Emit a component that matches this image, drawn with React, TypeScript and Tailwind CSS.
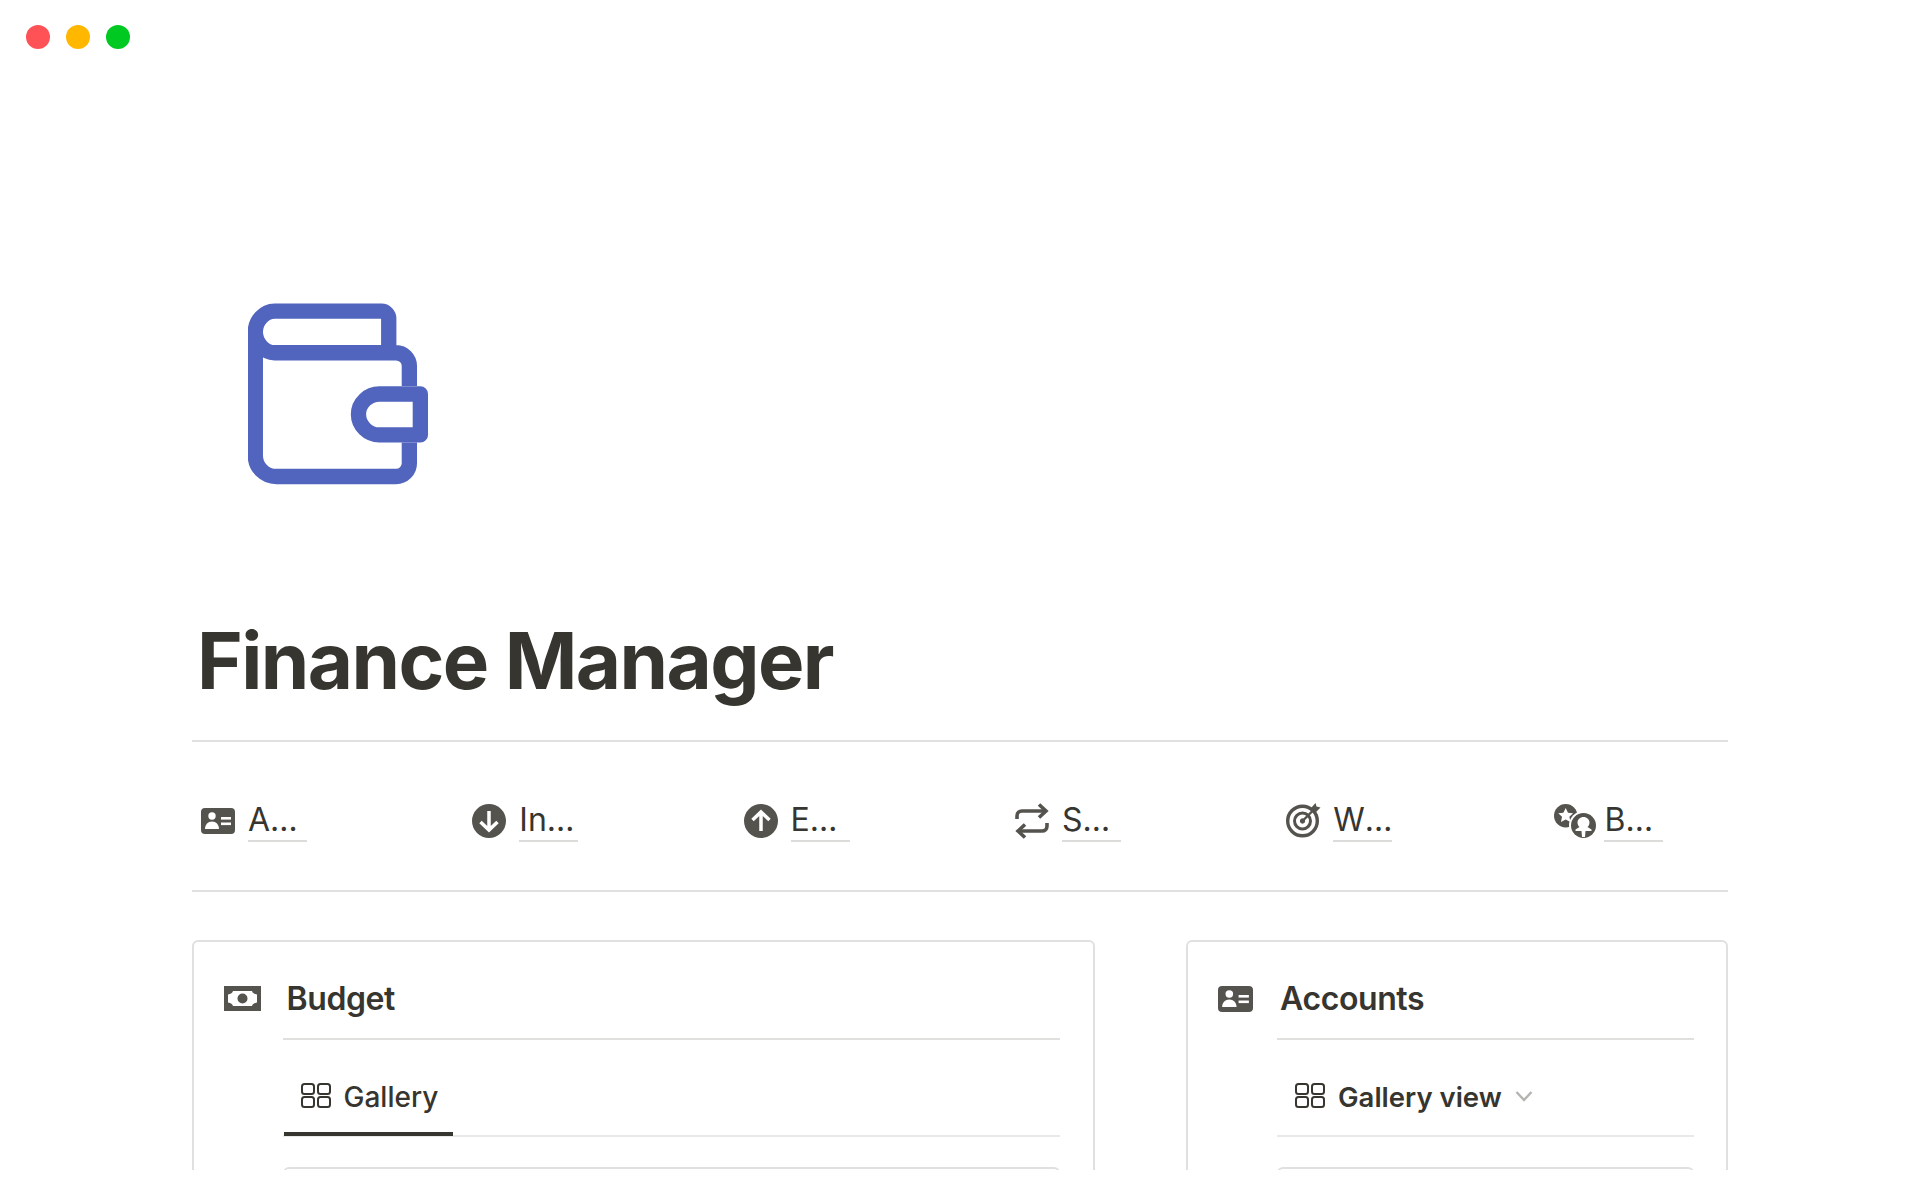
function IdCard({ className }: { className: string }) {
  return (
    <svg viewBox="0 0 34 26" preserveAspectRatio="none" className={className}>
      <rect width="34" height="26" rx="4" fill="#55534e" />
      <circle cx="11" cy="8" r="3.7" fill="#fff" />
      <path d="M4 21c0-4.5 3-7.5 7-7.5s7 3 7 7.500z" fill="#fff" />
      <rect x="20" y="9" width="10" height="2.6" fill="#fff" />
      <rect x="20" y="14.5" width="10" height="2.6" fill="#fff" />
    </svg>
  );
}

function ArrowCircle({ up }: { up?: boolean }) {
  return (
    <svg viewBox="0 0 34 34" className="h-[34px] w-[34px]">
      <circle cx="17" cy="17" r="17" fill="#55534e" />
      <path
        d={up ? "M17 27V8M8.5 16 17 8l8.5 8" : "M17 7v19M8.5 18l8.5 8 8.5-8"}
        fill="none"
        stroke="#fff"
        strokeWidth="3.5"
      />
    </svg>
  );
}

function Repeat() {
  return (
    <svg viewBox="0 0 34 36" className="h-[36px] w-[34px]" fill="none" stroke="#55534e" strokeWidth="3.6">
      <path d="M2 16v-3c0-3 2-5 5-5h24" />
      <path d="M24 1.5 31 8l-7 6.5" />
      <path d="M32 20v3c0 3-2 5-5 5H3" />
      <path d="M10 21.5 3 28l7 6.5" />
    </svg>
  );
}

function Target() {
  return (
    <svg viewBox="0 0 35 35" className="-mr-[1px] h-[35px] w-[35px] shrink-0" fill="none" stroke="#55534e">
      <circle cx="16.500" cy="18" r="14.800" strokeWidth="3.400" />
      <circle cx="16.500" cy="18" r="8" strokeWidth="3" />
      <circle cx="16.500" cy="18" r="2.200" fill="#55534e" strokeWidth="1" />
      <path d="M16.500 18 27 7.500" strokeWidth="2.400" />
      <path d="M25.500 4.500 29.500 0l1 3.500 4 1-4.500 4.500-4.500-.5z" fill="#55534e" strokeWidth="0" />
    </svg>
  );
}

function Badges() {
  return (
    <svg viewBox="0 0 42 34" className="-mr-[5px] h-[34px] w-[42px] shrink-0">
      <circle cx="11.700" cy="11.700" r="11.700" fill="#55534e" />
      <path
        d="m11.700 4 2.300 4.700 5.100.6-3.700 3.500 1 5.100-4.700-2.500-4.700 2.500 1-5.100-3.700-3.500 5.100-.6z"
        fill="#fff"
      />
      <circle cx="29.500" cy="21.500" r="14.500" fill="#fff" />
      <circle cx="29.500" cy="21.500" r="12.500" fill="#55534e" />
      <path d="M29.500 13c3.500 0 6 2.500 6 5.500 0 2-1 3.500-2 4.500l4 2.500v1.500h-6l-.5 6h-3l-.5-6h-6v-1.500l4-2.500c-1-1-2-2.500-2-4.500 0-3 2.500-5.500 6-5.500z" fill="#fff" />
    </svg>
  );
}

function Money() {
  return (
    <svg viewBox="0 0 37 25" className="h-[25px] w-[37px] shrink-0">
      <rect width="37" height="25" fill="#55534e" />
      <path
        d="M9 5h19c.5 2 2 3 5 3.500v8c-3 .5-4.500 1.500-5 3.500H9c-.5-2-2-3-5-3.500v-8C7 8 8.500 7 9 5z"
        fill="#fff"
      />
      <circle cx="18.500" cy="12.500" r="5" fill="#55534e" />
    </svg>
  );
}

function Grid() {
  return (
    <svg viewBox="0 0 30 25" className="h-[25px] w-[30px] shrink-0" fill="none" stroke="#37352f" strokeWidth="2">
      <rect x="1" y="1" width="12" height="10" rx="2.500" />
      <rect x="17" y="1" width="12" height="10" rx="2.500" />
      <rect x="1" y="14" width="12" height="10" rx="2.500" />
      <rect x="17" y="14" width="12" height="10" rx="2.500" />
    </svg>
  );
}

function Wallet() {
  return (
    <svg viewBox="85 70 541 544" className="ml-[56px] h-[182px] w-[180px]" fill="none" stroke="#5164be" strokeWidth="46" strokeLinejoin="round">
      <path d="M508 218V115c0-12-10-22-22-22H165c-32 0-58 30-58 62s26 63 58 63h365c22 0 40 18 40 40v60M570 488v62c0 22-18 40-40 40H170c-35 0-63-28-63-63V155" />
      <path d="M603 342H480c-34 0-63 27-63 61s29 62 63 62h123z" />
    </svg>
  );
}

const links = [
  { label: "Accounts", icon: <IdCard className="h-[26px] w-[34px]" /> },
  { label: "Income", icon: <ArrowCircle /> },
  { label: "Expenses", icon: <ArrowCircle up /> },
  { label: "Subscriptions", icon: <Repeat /> },
  { label: "Wishlist", icon: <Target /> },
  { label: "Budget", icon: <Badges /> },
];

export default function App() {
  return (
    <div className="h-[1200px] bg-white font-['Inter',sans-serif] text-[#37352f]">
      <div className="h-[1170px] overflow-hidden">
        <div className="flex gap-4 pl-[26px] pt-[25px]">
          <span className="h-6 w-6 rounded-full bg-[#ff5257]" />
          <span className="h-6 w-6 rounded-full bg-[#ffb700]" />
          <span className="h-6 w-6 rounded-full bg-[#00ca22]" />
        </div>

        <main className="mx-[192px] mt-[254px]">
          <Wallet />

          <h1 className="mt-[128px] pl-[5px] text-[78px] font-bold leading-[96px] tracking-[-0.02em]">
            Finance Manager
          </h1>

          <div className="mt-[31px] h-[2px] bg-[#e0e0df]" />

          <nav className="flex h-[148px] items-center pl-[9px] pt-[8px]">
            {links.map((link) => (
              <div key={link.label} className="flex w-[271.300px] shrink-0 items-center gap-[13px] last:w-auto">
                <div className="mt-[1px] flex h-[36px] w-[34px] shrink-0 items-center justify-end">{link.icon}</div>
                <span className="w-[59px] truncate border-b-2 border-[#dcdcdb] pt-[2px] text-[32px] leading-[40px]">
                  {link.label}
                </span>
              </div>
            ))}
          </nav>

          <div className="h-[2px] bg-[#e0e0df]" />

          <div className="mt-[48px] flex gap-[91px]">
            <section className="h-[400px] w-[903px] shrink-0 rounded-[6px] border-2 border-[#e0e0df] pl-[30px] pr-[33px] pt-[38px]">
              <div className="flex gap-[21.500px]">
                <div className="pt-[6px]">
                  <Money />
                </div>
                <div className="flex-1">
                  <h2 className="pl-[4px] text-[32px] font-semibold leading-[38px] tracking-[-0.4px]">Budget</h2>
                  <div className="mt-[20px] h-[2px] bg-[#e0e0df]" />
                  <div className="mt-[43px] flex h-[53px] items-start">
                    <div className="ml-[1px] flex h-[53px] w-[169px] items-start gap-[13px] border-b-4 border-[#37352f] pl-[17px] text-[28px] font-medium leading-[28px]">
                      <Grid />
                      Gallery
                    </div>
                  </div>
                  <div className="-mt-[1px] h-[2px] bg-[#e9e9e8]" />
                  <div className="mt-[30px] h-[100px] rounded-[6px] border-2 border-[#e0e0df]" />
                </div>
              </div>
            </section>

            <section className="h-[400px] flex-1 rounded-[6px] border-2 border-[#e0e0df] pl-[30px] pr-[32px] pt-[38px]">
              <div className="flex gap-[24px]">
                <div className="pt-[6px]">
                  <IdCard className="h-[26px] w-[35px]" />
                </div>
                <div className="flex-1">
                  <h2 className="pl-[3px] text-[32px] font-semibold leading-[38px] tracking-[-0.4px]">Accounts</h2>
                  <div className="mt-[20px] h-[2px] bg-[#e0e0df]" />
                  <div className="mt-[43px] flex h-[53px] items-start gap-[13px] pl-[18px] text-[27.500px] font-semibold leading-[28px]">
                    <Grid />
                    Gallery view
                    <svg viewBox="0 0 18 12" className="mt-[7px] h-[12px] w-[18px]" fill="none" stroke="#b5b4b1" strokeWidth="2.400">
                      <path d="m1.500 2 7.500 8 7.500-8" />
                    </svg>
                  </div>
                  <div className="-mt-[1px] h-[2px] bg-[#e9e9e8]" />
                  <div className="mt-[30px] h-[100px] rounded-[6px] border-2 border-[#e0e0df]" />
                </div>
              </div>
            </section>
          </div>
        </main>
      </div>
    </div>
  );
}
